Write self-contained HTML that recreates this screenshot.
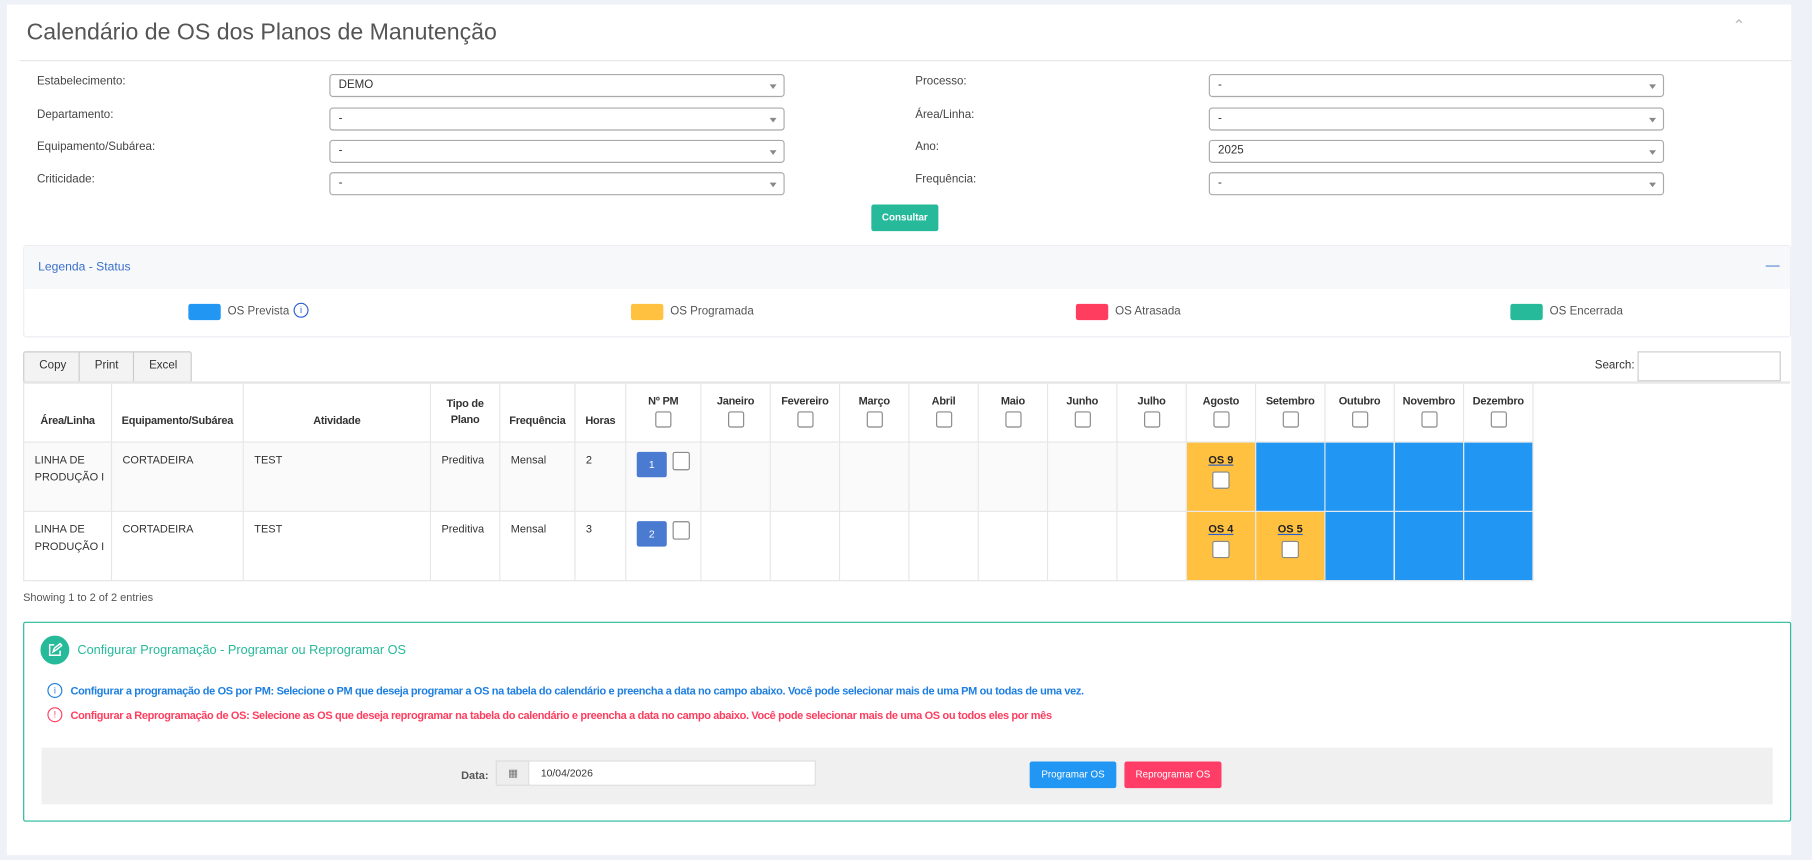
<!DOCTYPE html>
<html><head><meta charset="utf-8"><style>
html,body{margin:0;padding:0;width:1812px;height:860px;overflow:hidden;background:#eef1f7;font-family:"Liberation Sans",sans-serif;}
#f{position:absolute;left:0;top:0;width:1568px;height:744px;transform:scale(1.15561);transform-origin:0 0;}
.a{position:absolute;white-space:nowrap;}
.card{left:6px;top:4px;width:1544px;height:736px;background:#fff;}
.lbl{font-size:10px;color:#444;}
.sel{width:392px;height:18px;border:1px solid #aaa;border-radius:3px;background:#fff;font-size:10px;color:#333;line-height:18px;text-indent:7px;}
.sel:after{content:"";position:absolute;right:6px;top:8px;border-left:3px solid transparent;border-right:3px solid transparent;border-top:4px solid #888;}
table{border-collapse:collapse;position:absolute;left:20px;top:331px;font-size:9.5px;color:#333;table-layout:fixed;}
td,th{border:1px solid #e6e6e6;padding:0;overflow:hidden;box-sizing:border-box;white-space:nowrap}
th{height:51px;font-weight:bold;text-align:center;vertical-align:top;padding-top:10px;font-size:9.5px;letter-spacing:-0.2px;line-height:12px}
th.t{vertical-align:bottom;padding:0 0 11px 0}
td{vertical-align:top;padding:8px 4px 0 9px;height:60px;line-height:15px;}
tr.o td{background:#fafafa}
.cb{display:inline-block;width:12px;height:12px;border:1px solid #888;border-radius:2px;background:#fff;margin-top:2px}
tr td.b{background:#2196f3;padding:0}
tr td.y{background:#ffc13f;text-align:center;padding:8px 0 0}
.os{font-weight:bold;text-decoration:underline;text-decoration-color:#2a5fd0;font-size:9.5px;color:#222;line-height:13px}
.pm{display:inline-block;width:26px;height:22px;background:#4a7bd0;color:#fff;font-size:9px;text-align:center;line-height:22px;border-radius:2px;vertical-align:top;margin-right:5px}
</style></head><body><div id="f">
<div class="a card"></div>
<div class="a" style="left:23px;top:17px;font-size:20px;color:#555">Calendário de OS dos Planos de Manutenção</div>
<div class="a" style="left:1499px;top:14px;font-size:14px;color:#bbb">&#8963;</div>
<div class="a" style="left:17px;top:52px;width:1533px;height:1px;background:#e6e6e6"></div>

<div class="a lbl" style="left:32px;top:65px">Estabelecimento:</div>
<div class="a lbl" style="left:32px;top:94px">Departamento:</div>
<div class="a lbl" style="left:32px;top:122px">Equipamento/Subárea:</div>
<div class="a lbl" style="left:32px;top:150px">Criticidade:</div>
<div class="a sel" style="left:285px;top:64px">DEMO</div>
<div class="a sel" style="left:285px;top:93px">-</div>
<div class="a sel" style="left:285px;top:121px">-</div>
<div class="a sel" style="left:285px;top:149px">-</div>
<div class="a lbl" style="left:792px;top:65px">Processo:</div>
<div class="a lbl" style="left:792px;top:94px">Área/Linha:</div>
<div class="a lbl" style="left:792px;top:122px">Ano:</div>
<div class="a lbl" style="left:792px;top:150px">Frequência:</div>
<div class="a sel" style="left:1046px;top:64px">-</div>
<div class="a sel" style="left:1046px;top:93px">-</div>
<div class="a sel" style="left:1046px;top:121px">2025</div>
<div class="a sel" style="left:1046px;top:149px">-</div>
<div class="a" style="left:754px;top:177px;width:58px;height:23px;background:#26b99a;border-radius:2px;color:#fff;font-size:8.5px;font-weight:bold;text-align:center;line-height:23px">Consultar</div>

<div class="a" style="left:20px;top:212px;width:1528px;height:78px;border:1px solid #eceef2;border-radius:3px"></div>
<div class="a" style="left:21px;top:213px;width:1528px;height:37px;background:#f7f8fa"></div>
<div class="a" style="left:33px;top:225px;font-size:10.5px;color:#3a6fc9">Legenda - Status</div>
<div class="a" style="left:1528px;top:222px;font-size:12px;color:#3a6fc9">—</div>
<div class="a" style="left:163px;top:263px;width:28px;height:14px;background:#2196f3;border-radius:2px"></div>
<div class="a lbl" style="left:197px;top:264px;color:#555">OS Prevista</div>
<div class="a" style="left:254px;top:262px;width:11px;height:11px;border:1px solid #2a5fd0;border-radius:50%;color:#2a5fd0;font-size:8px;text-align:center;line-height:11px">i</div>
<div class="a" style="left:546px;top:263px;width:28px;height:14px;background:#ffc13f;border-radius:2px"></div>
<div class="a lbl" style="left:580px;top:264px;color:#555">OS Programada</div>
<div class="a" style="left:931px;top:263px;width:28px;height:14px;background:#ff3d5f;border-radius:2px"></div>
<div class="a lbl" style="left:965px;top:264px;color:#555">OS Atrasada</div>
<div class="a" style="left:1307px;top:263px;width:28px;height:14px;background:#26b99a;border-radius:2px"></div>
<div class="a lbl" style="left:1341px;top:264px;color:#555">OS Encerrada</div>

<div class="a" style="left:20px;top:304px;width:144px;height:25px;border:1px solid #ccc;border-radius:2px;background:#f3f3f3"></div>
<div class="a" style="left:68px;top:305px;width:1px;height:25px;background:#ccc"></div>
<div class="a" style="left:115px;top:305px;width:1px;height:25px;background:#ccc"></div>
<div class="a lbl" style="left:34px;top:311px;color:#333">Copy</div>
<div class="a lbl" style="left:82px;top:311px;color:#333">Print</div>
<div class="a lbl" style="left:129px;top:311px;color:#333">Excel</div>
<div class="a lbl" style="left:1380px;top:311px;color:#333">Search:</div>
<div class="a" style="left:1417px;top:304px;width:122px;height:24px;border:1px solid #ccc"></div>
<div class="a" style="left:20px;top:330px;width:1529px;height:2px;background:#e6e6e6"></div>

<table style="width:1306px">
<colgroup><col style="width:76px"><col style="width:114px"><col style="width:162px"><col style="width:60px"><col style="width:65px"><col style="width:44px"><col style="width:65px"><col span="12" style="width:60px"></colgroup>
<tr><th class="t">Área/Linha</th><th class="t">Equipamento/Subárea</th><th class="t">Atividade</th><th class="t" style="line-height:14px">Tipo de<br>Plano</th><th class="t">Frequência</th><th class="t">Horas</th>
<th>Nº PM<br><span class="cb"></span></th><th>Janeiro<br><span class="cb"></span></th><th>Fevereiro<br><span class="cb"></span></th><th>Março<br><span class="cb"></span></th><th>Abril<br><span class="cb"></span></th><th>Maio<br><span class="cb"></span></th><th>Junho<br><span class="cb"></span></th><th>Julho<br><span class="cb"></span></th><th>Agosto<br><span class="cb"></span></th><th>Setembro<br><span class="cb"></span></th><th>Outubro<br><span class="cb"></span></th><th>Novembro<br><span class="cb"></span></th><th>Dezembro<br><span class="cb"></span></th></tr>
<tr class="o"><td>LINHA DE<br>PRODUÇÃO I</td><td>CORTADEIRA</td><td>TEST</td><td>Preditiva</td><td>Mensal</td><td>2</td><td><span class="pm">1</span><span class="cb" style="width:13px;height:14px;margin:0"></span></td><td></td><td></td><td></td><td></td><td></td><td></td><td></td><td class="y"><span class="os">OS 9</span><br><span class="cb" style="width:13px;height:13px"></span></td><td class="b"></td><td class="b"></td><td class="b"></td><td class="b"></td></tr>
<tr><td>LINHA DE<br>PRODUÇÃO I</td><td>CORTADEIRA</td><td>TEST</td><td>Preditiva</td><td>Mensal</td><td>3</td><td><span class="pm">2</span><span class="cb" style="width:13px;height:14px;margin:0"></span></td><td></td><td></td><td></td><td></td><td></td><td></td><td></td><td class="y"><span class="os">OS 4</span><br><span class="cb" style="width:13px;height:13px"></span></td><td class="y"><span class="os">OS 5</span><br><span class="cb" style="width:13px;height:13px"></span></td><td class="b"></td><td class="b"></td><td class="b"></td></tr>
</table>

<div class="a" style="left:20px;top:512px;font-size:9.5px;color:#555">Showing 1 to 2 of 2 entries</div>

<div class="a" style="left:20px;top:538px;width:1528px;height:171px;border:1px solid #26b99a;border-radius:2px"></div>
<div class="a" style="left:35px;top:550px;width:25px;height:25px;border-radius:50%;background:#26b99a"></div>
<svg class="a" style="left:41px;top:556px" width="13" height="13" viewBox="0 0 13 13" fill="none" stroke="#fff" stroke-width="1.3"><path d="M6 2H2v9h9V7"/><path d="M5 8l1-3 5-4 1.5 1.5-5 4z"/></svg>
<div class="a" style="left:67px;top:557px;font-size:11px;color:#26b99a">Configurar Programação - Programar ou Reprogramar OS</div>
<div class="a" style="left:41px;top:591px;width:11px;height:11px;border:1px solid #1e7fe0;border-radius:50%;color:#1e7fe0;font-size:8px;text-align:center;line-height:11px">i</div>
<div class="a" style="left:61px;top:593px;font-size:9.5px;font-weight:bold;color:#1e7fe0;letter-spacing:-0.3px">Configurar a programação de OS por PM: Selecione o PM que deseja programar a OS na tabela do calendário e preencha a data no campo abaixo. Você pode selecionar mais de uma PM ou todas de uma vez.</div>
<div class="a" style="left:41px;top:612px;width:11px;height:11px;border:1px solid #ff3d5f;border-radius:50%;color:#ff3d5f;font-size:8px;text-align:center;line-height:11px">!</div>
<div class="a" style="left:61px;top:614px;font-size:9.5px;font-weight:bold;color:#ff3d5f;letter-spacing:-0.3px">Configurar a Reprogramação de OS: Selecione as OS que deseja reprogramar na tabela do calendário e preencha a data no campo abaixo. Você pode selecionar mais de uma OS ou todos eles por mês</div>

<div class="a" style="left:36px;top:647px;width:1498px;height:49px;background:#f0f0f0"></div>
<div class="a" style="left:399px;top:666px;font-size:9.5px;font-weight:bold;color:#555">Data:</div>
<div class="a" style="left:429px;top:658px;width:28px;height:20px;background:#eee;border:1px solid #ddd;font-size:9px;color:#777;text-align:center;line-height:20px">&#9638;</div>
<div class="a" style="left:457px;top:658px;width:247px;height:20px;background:#fff;border:1px solid #ddd;font-size:9px;color:#333;line-height:20px;text-indent:10px">10/04/2026</div>
<div class="a" style="left:891px;top:659px;width:75px;height:23px;background:#2196f3;border-radius:2px;color:#fff;font-size:8.5px;text-align:center;line-height:23px">Programar OS</div>
<div class="a" style="left:973px;top:659px;width:84px;height:23px;background:#ff3d67;border-radius:2px;color:#fff;font-size:8.5px;text-align:center;line-height:23px">Reprogramar OS</div>
</div></body></html>
